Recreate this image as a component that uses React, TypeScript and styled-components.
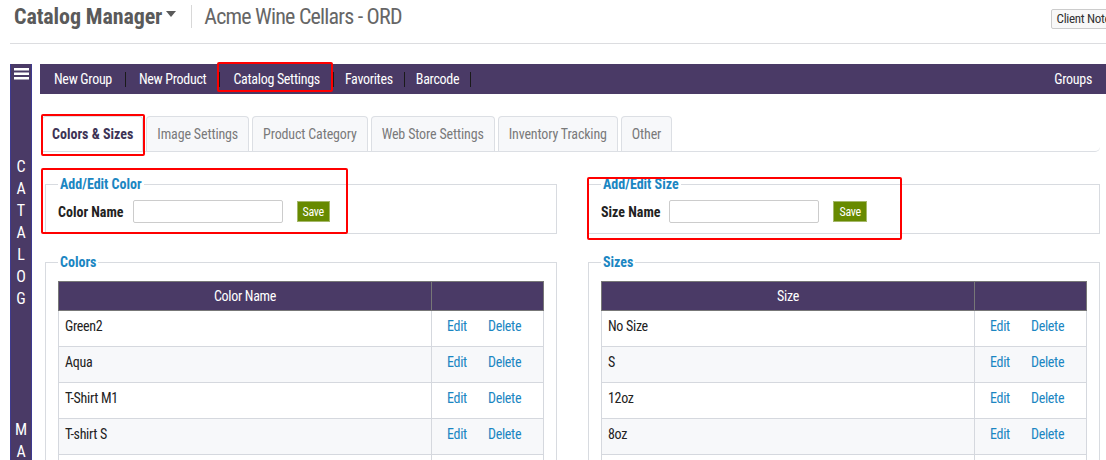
import styled, { createGlobalStyle } from "styled-components"

const GlobalStyle = createGlobalStyle`
    html, body {
        margin: 0;
        overflow: hidden;
        background: #fff;
    }
    body {
        font-family: "Roboto Condensed", "Liberation Sans Narrow", "Arial Narrow", Roboto, sans-serif;
        color: #222;
        font-size: 14px;
        letter-spacing: -0.3px;
    }
`

const purple = "#4a3a66"
const blue = "#1b86c2"

const Header = styled.div`
    display: flex;
    align-items: center;
    height: 33px;
    padding: 0 0 10px 4px;
    margin-left: 10px;
    border-bottom: 1px solid #dcdde0;
`

const Title = styled.h1`
    margin: 0;
    font-size: 22px;
    font-weight: 700;
    color: #5a5a5a;
    line-height: 30px;
    letter-spacing: -0.1px;
`

const Caret = styled.span`
    width: 0;
    height: 0;
    margin: 0 0 6px 4px;
    border-left: 5px solid transparent;
    border-right: 5px solid transparent;
    border-top: 6px solid #5a5a5a;
`

const Divider = styled.span`
    width: 1px;
    height: 23px;
    margin: 0 12px 0 15px;
    background: #d8d8d8;
`

const Subtitle = styled.span`
    font-size: 22px;
    color: #666;
    line-height: 30px;
    letter-spacing: -0.8px;
    flex: 1;
`

const ClientNotes = styled.button`
    font-family: inherit;
    font-size: 13px;
    letter-spacing: -0.3px;
    color: #333;
    background: #f8f8f8;
    border: 1px solid #ccc;
    border-radius: 2px;
    height: 20px;
    padding: 0 5px;
    margin: 4px -16px 0 0;
    white-space: nowrap;
`

const Body = styled.div`
    display: flex;
    padding-top: 20px;
`

const Sidebar = styled.div`
    width: 20px;
    margin-left: 10px;
    background: ${purple};
    border-left: 1px solid #3e3a90;
    border-right: 1px solid #3e3a90;
    padding-top: 4px;
    display: flex;
    flex-direction: column;
    align-items: center;
    color: #fff;
`

const Word = styled.div<{ $gap: number }>`
    display: flex;
    flex-direction: column;
    align-items: center;
    margin-top: ${(p) => p.$gap}px;
    font-size: 16px;
    line-height: 22px;
    letter-spacing: 0;
`

const Main = styled.div`
    flex: 1;
    margin-left: 8px;
    min-width: 0;
`

const NavBar = styled.div`
    display: flex;
    align-items: center;
    height: 30px;
    background: ${purple};
    padding-left: 1px;
    padding-right: 1px;
`

const NavItem = styled.span<{ $marked?: boolean; $tight?: boolean }>`
    position: relative;
    color: #fff;
    font-size: 14px;
    padding: 0 ${(p) => (p.$tight ? 11 : 13)}px;
    line-height: 30px;
    white-space: nowrap;
    &::after {
        content: "";
        display: ${(p) => (p.$marked ? "block" : "none")};
        position: absolute;
        left: -3px;
        right: 0;
        top: -2px;
        bottom: 2px;
        border: 2px solid #f00;
        border-radius: 2px;
    }
`

const NavSep = styled.span`
    width: 1px;
    height: 15px;
    background: #1a1a1a;
`

const NavSpacer = styled.span`
    flex: 1;
`

const TabBar = styled.div`
    display: flex;
    gap: 3px;
    margin: 22px 6px 0 2px;
    border-bottom: 1px solid #dcdfe4;
    border-bottom-right-radius: 5px;
`

const Tab = styled.div<{ $active?: boolean }>`
    position: relative;
    height: 34px;
    padding: 0 ${(p) => (p.$active ? 9 : 10)}px;
    display: flex;
    align-items: center;
    font-size: 14px;
    letter-spacing: ${(p) => (p.$active ? 0 : -0.15)}px;
    border: 1px solid #dcdfe4;
    border-bottom: none;
    border-radius: 4px 4px 0 0;
    margin-bottom: ${(p) => (p.$active ? -1 : 0)}px;
    background: ${(p) => (p.$active ? "#fff" : "#f7f8fa")};
    color: ${(p) => (p.$active ? "#3d3355" : "#7a7a7a")};
    font-weight: ${(p) => (p.$active ? 700 : 400)};
    &::after {
        content: "";
        display: ${(p) => (p.$active ? "block" : "none")};
        position: absolute;
        left: -2px;
        right: -3px;
        top: -3px;
        bottom: -5px;
        border: 2px solid #f00;
        border-radius: 2px;
    }
`

const Content = styled.div`
    display: grid;
    grid-template-columns: 1fr 1fr;
    column-gap: 31px;
    padding: 23px 6px 0 5px;
`

const Column = styled.div`
    position: relative;
    display: flex;
    flex-direction: column;
    gap: 19px;
    min-width: 0;
`

const Highlight = styled.div<{ $top: number; $left: number; $width: number; $height: number }>`
    position: absolute;
    top: ${(p) => p.$top}px;
    left: ${(p) => p.$left}px;
    width: ${(p) => p.$width}px;
    height: ${(p) => p.$height}px;
    border: 2px solid #f00;
    border-radius: 2px;
    pointer-events: none;
    box-sizing: border-box;
`

const Fieldset = styled.fieldset`
    margin: 0;
    min-width: 0;
    border: 1px solid #d8dbe0;
    padding: 7px 12px 10px;
`

const Legend = styled.legend`
    padding: 0 2px;
    font-size: 14px;
    font-weight: 700;
    line-height: 18px;
    letter-spacing: 0;
    color: ${blue};
`

const FormRow = styled.div`
    display: flex;
    align-items: center;
`

const Label = styled.label`
    font-weight: 700;
    font-size: 14px;
    letter-spacing: 0;
    margin-right: 9px;
`

const Input = styled.input`
    width: 150px;
    height: 23px;
    box-sizing: border-box;
    border: 1px solid #ccc;
    border-radius: 2px;
`

const SaveButton = styled.button`
    margin-left: 14px;
    font-family: inherit;
    font-size: 12px;
    letter-spacing: -0.3px;
    color: #fff;
    background: #678a00;
    border: 1px solid #a5b86a;
    height: 21px;
    padding: 0 5px;
`

const Table = styled.table`
    margin-top: 3px;
    width: 100%;
    table-layout: fixed;
    border-collapse: collapse;
    border: 1px solid #d5d8de;
`

const ActionCol = styled.col`
    width: 112px;
`

const Th = styled.th`
    background: ${purple};
    color: #fff;
    font-weight: 400;
    font-size: 14px;
    height: 28px;
    padding: 0;
    border: 1px solid #777;
`

const Row = styled.tr`
    &:nth-child(even) {
        background: #f7f8fa;
    }
`

const Td = styled.td`
    height: 36px;
    box-sizing: border-box;
    border: 1px solid #d5d8de;
    padding: 5px 6px 0;
    vertical-align: top;
    line-height: 20px;
`

const ActionTd = styled(Td)`
    padding-left: 15px;
    white-space: nowrap;
`

const Action = styled.a`
    color: ${blue};
    margin-right: 21px;
`

const Menu = () => (
    <svg width="15" height="12" viewBox="0 0 15 12">
        <rect x="0" y="0" width="15" height="2.5" fill="#fff" />
        <rect x="0" y="4.5" width="15" height="2.5" fill="#fff" />
        <rect x="0" y="9" width="15" height="2.5" fill="#fff" />
    </svg>
)

const colors = ["Green2", "Aqua", "T-Shirt M1", "T-shirt S", "Red", "Blue", "Black"]
const sizes = ["No Size", "S", "12oz", "8oz", "M", "L", "XL"]
const tabs = ["Colors & Sizes", "Image Settings", "Product Category", "Web Store Settings", "Inventory Tracking", "Other"]

interface ListProps {
    title: string
    heading: string
    items: string[]
}

const ListBox = ({ title, heading, items }: ListProps) => (
    <Fieldset>
        <Legend>{title}</Legend>
        <Table>
            <colgroup>
                <col />
                <ActionCol />
            </colgroup>
            <thead>
                <tr>
                    <Th>{heading}</Th>
                    <Th></Th>
                </tr>
            </thead>
            <tbody>
                {items.map((item) => (
                    <Row key={item}>
                        <Td>{item}</Td>
                        <ActionTd>
                            <Action>Edit</Action>
                            <Action>Delete</Action>
                        </ActionTd>
                    </Row>
                ))}
            </tbody>
        </Table>
    </Fieldset>
)

const EditBox = ({ title, label }: { title: string; label: string }) => (
    <Fieldset>
        <Legend>{title}</Legend>
        <FormRow>
            <Label>{label}</Label>
            <Input />
            <SaveButton>Save</SaveButton>
        </FormRow>
    </Fieldset>
)

const App = () => {
    return (
        <>
            <GlobalStyle />
            <Header>
                <Title>Catalog Manager</Title>
                <Caret />
                <Divider />
                <Subtitle>Acme Wine Cellars - ORD</Subtitle>
                <ClientNotes>Client Notes</ClientNotes>
            </Header>
            <Body>
                <Sidebar>
                    <Menu />
                    <Word $gap={76}>
                        {"CATALOG".split("").map((c, i) => <span key={i}>{c}</span>)}
                    </Word>
                    <Word $gap={109}>
                        {"MANAGER".split("").map((c, i) => <span key={i}>{c}</span>)}
                    </Word>
                </Sidebar>
                <Main>
                    <NavBar>
                        <NavItem>New Group</NavItem>
                        <NavSep />
                        <NavItem>New Product</NavItem>
                        <NavSep />
                        <NavItem $marked>Catalog Settings</NavItem>
                        <NavSep />
                        <NavItem $tight>Favorites</NavItem>
                        <NavSep />
                        <NavItem $tight>Barcode</NavItem>
                        <NavSep />
                        <NavSpacer />
                        <NavItem>Groups</NavItem>
                    </NavBar>
                    <TabBar>
                        {tabs.map((t, i) => (
                            <Tab key={t} $active={i === 0}>{t}</Tab>
                        ))}
                    </TabBar>
                    <Content>
                        <Column>
                            <EditBox title="Add/Edit Color" label="Color Name" />
                            <ListBox title="Colors" heading="Color Name" items={colors} />
                            <Highlight $top={-7} $left={-4} $width={307} $height={66} />
                        </Column>
                        <Column>
                            <EditBox title="Add/Edit Size" label="Size Name" />
                            <ListBox title="Sizes" heading="Size" items={sizes} />
                            <Highlight $top={2} $left={-1} $width={315} $height={63} />
                        </Column>
                    </Content>
                </Main>
            </Body>
        </>
    )
}

export default App
